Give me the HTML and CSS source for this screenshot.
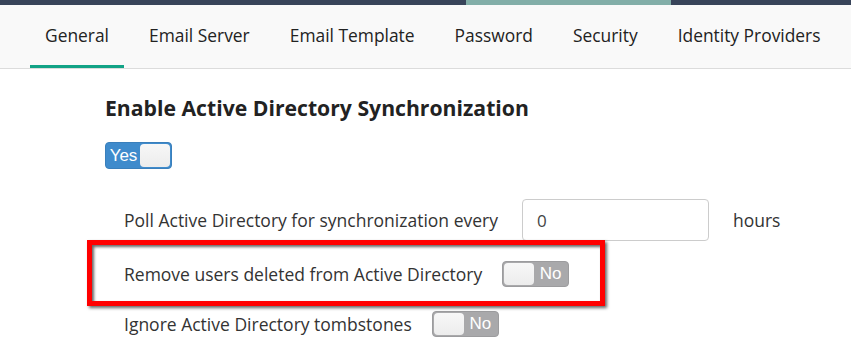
FILE: index.html
```html
<!DOCTYPE html>
<html lang="en">

<head>
  <meta charset="UTF-8" />
  <title>Settings - General</title>
  <link rel="stylesheet" href="styles.css">
</head>

<body>
  <div class="topbar"><span class="topbar-accent"></span></div>

  <nav class="tabs">
    <a href="#" class="tab active">General</a>
    <a href="#" class="tab">Email Server</a>
    <a href="#" class="tab">Email Template</a>
    <a href="#" class="tab">Password</a>
    <a href="#" class="tab">Security</a>
    <a href="#" class="tab">Identity Providers</a>
  </nav>

  <main class="content">
    <h2 class="section-title">Enable Active Directory Synchronization</h2>
    <div class="toggle on">
      <span class="toggle-label">Yes</span>
      <span class="toggle-handle"></span>
    </div>

    <div class="options">
      <div class="row row-poll">
        <label>Poll Active Directory for synchronization every</label>
        <input type="text" class="field" value="0" />
        <span>hours</span>
      </div>

      <div class="row row-remove highlighted">
        <label>Remove users deleted from Active Directory</label>
        <div class="toggle off">
          <span class="toggle-handle"></span>
          <span class="toggle-label">No</span>
        </div>
      </div>

      <div class="row row-ignore">
        <label>Ignore Active Directory tombstones</label>
        <div class="toggle off">
          <span class="toggle-handle"></span>
          <span class="toggle-label">No</span>
        </div>
      </div>
    </div>
  </main>
</body>

</html>
```

FILE: styles.css
```css
:root {
  --bar-dark: #38445a;
  --bar-accent: #82aea8;
  --tab-line: #12a386;
  --text: #333;
  --blue: #3f8bcc;
  --gray: #a9a9ab;
}

body {
  margin: 0;
  font-family: 'Open Sans', sans-serif;
  color: var(--text);
  background: #fff;
}

.topbar {
  height: 5px;
  background: var(--bar-dark);
  display: flex;
}

.topbar-accent {
  margin-left: 466px;
  width: 205px;
  background: var(--bar-accent);
}

.tabs {
  display: flex;
  height: 63px;
  padding-left: 30px;
  background: #f9f9f9;
  border-bottom: 1px solid #dcdcdc;
  overflow: hidden;
}

.tab {
  flex-shrink: 0;
  box-sizing: border-box;
  height: 64px;
  margin-right: 10px;
  padding: 18px 15px 0;
  line-height: 24px;
  font-size: 17.4px;
  white-space: nowrap;
  color: #222;
  text-decoration: none;
}

.tab.active {
  border-bottom: 4px solid var(--tab-line);
}

.content {
  padding-left: 105px;
}

.section-title {
  margin: 25px 0 20px;
  font-size: 21.2px;
  line-height: 28px;
  font-weight: 700;
  color: #222;
}

.toggle {
  box-sizing: border-box;
  display: inline-flex;
  align-items: center;
  width: 67px;
  height: 27px;
  padding: 1px;
  border-radius: 4px;
  font-family: 'Liberation Sans', Arial, sans-serif;
  font-size: 17px;
  color: #fff;
}

.toggle.on {
  background: var(--blue);
  border: 1px solid #3a7fbb;
}

.toggle.off {
  height: 26px;
  background: var(--gray);
  border: 1px solid #9c9c9e;
}

.toggle-label {
  flex: 1;
  text-align: center;
}

.toggle-handle {
  width: 30px;
  height: 100%;
  border-radius: 4px;
  background: linear-gradient(#f7f7f7, #ececec);
}

.options {
  margin: 30px 0 0 19px;
}

.row {
  display: flex;
  align-items: center;
  gap: 20px;
  font-size: 17.5px;
}

.row-poll {
  height: 42px;
}

.row-remove {
  height: 42px;
  margin-top: 12px;
}

.row-ignore {
  height: 42px;
  margin-top: 8px;
}

.field {
  box-sizing: border-box;
  width: 187px;
  height: 42px;
  margin: 0 4px;
  padding: 0 14px;
  border: 1px solid #ccc;
  border-radius: 4px;
  font-family: 'Open Sans', sans-serif;
  font-size: 17px;
  color: #444;
}

.highlighted {
  position: relative;
}

.highlighted::before {
  content: '';
  position: absolute;
  left: -37px;
  top: -13px;
  width: 518px;
  height: 66px;
  box-sizing: border-box;
  border: 5px solid #f00;
  box-shadow: 2px 2px 3px rgba(0, 0, 0, 0.6), inset 2px 2px 3px rgba(0, 0, 0, 0.6);
  pointer-events: none;
}
```
